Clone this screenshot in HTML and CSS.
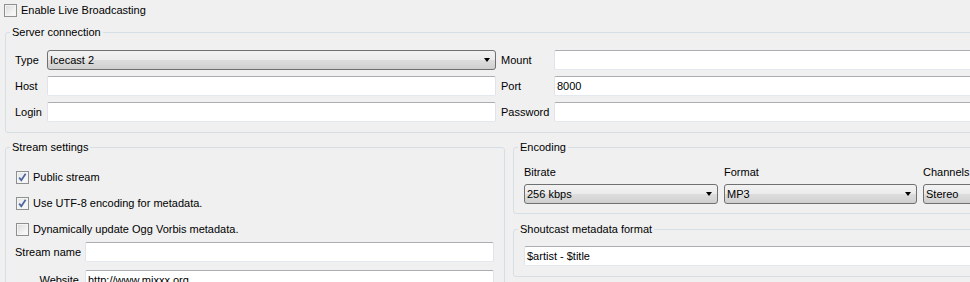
FILE: index.html
```html
<!DOCTYPE html>
<html lang="en">

<head>
  <meta charset="utf-8" />
  <title>Live Broadcasting</title>
  <link rel="stylesheet" href="styles.css">
</head>

<body>
  <div class="dialog">
    <label class="check top-check">
      <span class="box"></span>
      Enable Live Broadcasting
    </label>

    <!-- Server connection -->
    <fieldset class="group server">
      <legend>Server connection</legend>
      <div class="server-grid">
        <span class="label">Type</span>
        <div class="combo"><span>Icecast 2</span><i class="arrow"></i></div>
        <span class="label right-label">Mount</span>
        <div class="field"></div>

        <span class="label">Host</span>
        <div class="field"></div>
        <span class="label right-label">Port</span>
        <div class="field">8000</div>

        <span class="label">Login</span>
        <div class="field"></div>
        <span class="label right-label">Password</span>
        <div class="field"></div>
      </div>
    </fieldset>

    <div class="lower">
      <!-- Stream settings -->
      <fieldset class="group stream">
        <legend>Stream settings</legend>
        <div class="stream-body">
          <label class="check">
            <span class="box checked">
              <svg width="11" height="11" viewBox="0 0 11 11"><path d="M2.2 5.6 L4.3 8.2 L8.6 1.8" fill="none" stroke="#4a64a0" stroke-width="1.7" /></svg>
            </span>
            Public stream
          </label>
          <label class="check">
            <span class="box checked">
              <svg width="11" height="11" viewBox="0 0 11 11"><path d="M2.2 5.6 L4.3 8.2 L8.6 1.8" fill="none" stroke="#4a64a0" stroke-width="1.7" /></svg>
            </span>
            Use UTF-8 encoding for metadata.
          </label>
          <label class="check">
            <span class="box"></span>
            Dynamically update Ogg Vorbis metadata.
          </label>

          <div class="stream-form">
            <span class="label">Stream name</span>
            <div class="field"></div>
            <span class="label">Website</span>
            <div class="field">http://www.mixxx.org</div>
          </div>
        </div>
      </fieldset>

      <div class="side">
        <!-- Encoding -->
        <fieldset class="group encoding">
          <legend>Encoding</legend>
          <div class="encoding-grid">
            <div class="enc-col">
              <span class="label">Bitrate</span>
              <div class="combo"><span>256 kbps</span><i class="arrow"></i></div>
            </div>
            <div class="enc-col">
              <span class="label">Format</span>
              <div class="combo"><span>MP3</span><i class="arrow"></i></div>
            </div>
            <div class="enc-col">
              <span class="label">Channels</span>
              <div class="combo"><span>Stereo</span><i class="arrow"></i></div>
            </div>
          </div>
        </fieldset>

        <!-- Shoutcast metadata -->
        <fieldset class="group shoutcast">
          <legend>Shoutcast metadata format</legend>
          <div class="shout-body">
            <div class="field">$artist - $title</div>
          </div>
        </fieldset>
      </div>
    </div>
  </div>
</body>

</html>
```

FILE: styles.css
```css
/* Global Reset */
* {
  margin: 0;
  padding: 0;
  box-sizing: border-box;
}

html,
body {
  height: 100%;
  overflow: hidden;
}

body {
  font-family: 'Liberation Sans', Arial, sans-serif;
  font-size: 11px;
  line-height: 13px;
  color: #000;
  background-color: #f0f0f0;
}

.dialog {
  width: 1130px;
  padding-left: 5px;
}

.label {
  white-space: nowrap;
}

/* Checkboxes */
.check {
  display: flex;
  align-items: center;
  gap: 4px;
  height: 13px;
  white-space: nowrap;
}

.top-check {
  margin: 4px 0 0 -1px;
}

.box {
  width: 13px;
  height: 13px;
  border: 1px solid #8e8f8f;
  background: linear-gradient(135deg, #d9d9d9 0%, #f4f4f4 70%, #fafafa 100%);
  box-shadow: inset 0 0 0 1px #f4f4f4;
  display: flex;
  align-items: center;
  justify-content: center;
  flex-shrink: 0;
}

.box.checked {
  background: linear-gradient(135deg, #e4e4e4 0%, #f6f6f6 70%);
}

/* Group boxes */
.group {
  border: 1px solid #d5dfe5;
  border-radius: 3px;
  min-width: 0;
  padding-left: 0;
  padding-right: 0;
}

.group legend {
  margin-left: 4px;
  padding: 0 2px;
}

.server {
  margin-top: 9px;
  padding-top: 11px;
  padding-bottom: 10px;
}

.server-grid {
  display: grid;
  grid-template-columns: 32px 449px 58px 556px;
  grid-auto-rows: 20px;
  row-gap: 6px;
  align-items: center;
  padding-left: 9px;
}

.right-label {
  padding-left: 5px;
}

/* Inputs */
.field {
  height: 20px;
  background-color: #fff;
  border: 1px solid;
  border-color: #abadb3 #e2e3ea #e3e9ef #e2e3ea;
  border-radius: 2px;
  padding: 0 2px;
  display: flex;
  align-items: center;
  white-space: nowrap;
  overflow: hidden;
}

.combo {
  height: 20px;
  border: 1px solid #707070;
  border-radius: 3px;
  background: linear-gradient(#f2f2f2 0%, #ebebeb 48%, #dddddd 52%, #cfcfcf 100%);
  display: flex;
  align-items: center;
  justify-content: space-between;
  padding: 0 5px 0 2px;
  white-space: nowrap;
}

.arrow {
  width: 0;
  height: 0;
  border-left: 3.5px solid transparent;
  border-right: 3.5px solid transparent;
  border-top: 4px solid #000;
}

/* Lower part */
.lower {
  display: flex;
  gap: 8px;
  margin-top: 8px;
}

.stream {
  width: 500px;
  height: 200px;
  padding-top: 17px;
}

.stream-body {
  display: flex;
  flex-direction: column;
  padding: 0 10px 0 9px;
}

.stream-body .check {
  margin-left: 1px;
  margin-bottom: 13px;
}

.stream-body .check:nth-child(3) {
  margin-bottom: 6px;
}

.stream-form {
  display: grid;
  grid-template-columns: 64px 1fr;
  column-gap: 6px;
  grid-auto-rows: 20px;
  row-gap: 8px;
  align-items: center;
}

.stream-form .label {
  text-align: right;
}

.side {
  flex: 1;
  display: flex;
  flex-direction: column;
  gap: 9px;
}

.encoding {
  padding-top: 12px;
  padding-bottom: 9px;
}

.encoding-grid {
  display: grid;
  grid-template-columns: 194px 193px 194px;
  column-gap: 6px;
  padding: 0 10px;
}

.enc-col {
  display: flex;
  flex-direction: column;
  gap: 5px;
}

.shoutcast {
  padding-top: 10px;
  padding-bottom: 10px;
}

.shout-body {
  padding: 0 10px;
}
```
